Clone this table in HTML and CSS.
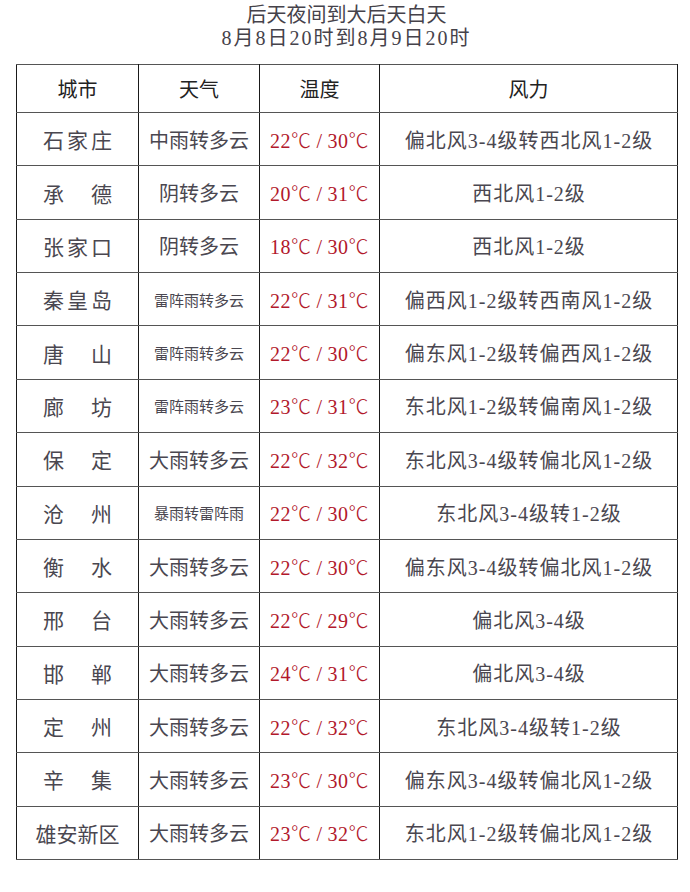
FILE: index.html
```html
<!DOCTYPE html>
<html lang="zh-CN">
<head>
<meta charset="utf-8">
<title>后天夜间到大后天白天</title>
<link rel="stylesheet" href="styles.css">
</head>
<body>
<div class="page">
  <div class="title">
    <div class="title-line">后天夜间到大后天白天</div>
    <div class="title-line spaced">8月8日20时到8月9日20时</div>
  </div>
  <table class="weather">
    <colgroup>
      <col class="c-city"><col class="c-wx"><col class="c-temp"><col class="c-wind">
    </colgroup>
    <thead>
      <tr><th>城市</th><th>天气</th><th>温度</th><th>风力</th></tr>
    </thead>
    <tbody>
      <tr><td class="city">石家庄</td><td>中雨转多云</td><td class="temp">22<span class="deg">℃</span><span class="sl">/</span>30<span class="deg">℃</span></td><td class="wind">偏北风3-4级转西北风1-2级</td></tr>
      <tr><td class="city">承　德</td><td>阴转多云</td><td class="temp">20<span class="deg">℃</span><span class="sl">/</span>31<span class="deg">℃</span></td><td class="wind">西北风1-2级</td></tr>
      <tr><td class="city">张家口</td><td>阴转多云</td><td class="temp">18<span class="deg">℃</span><span class="sl">/</span>30<span class="deg">℃</span></td><td class="wind">西北风1-2级</td></tr>
      <tr><td class="city">秦皇岛</td><td class="small">雷阵雨转多云</td><td class="temp">22<span class="deg">℃</span><span class="sl">/</span>31<span class="deg">℃</span></td><td class="wind">偏西风1-2级转西南风1-2级</td></tr>
      <tr><td class="city">唐　山</td><td class="small">雷阵雨转多云</td><td class="temp">22<span class="deg">℃</span><span class="sl">/</span>30<span class="deg">℃</span></td><td class="wind">偏东风1-2级转偏西风1-2级</td></tr>
      <tr><td class="city">廊　坊</td><td class="small">雷阵雨转多云</td><td class="temp">23<span class="deg">℃</span><span class="sl">/</span>31<span class="deg">℃</span></td><td class="wind">东北风1-2级转偏南风1-2级</td></tr>
      <tr><td class="city">保　定</td><td>大雨转多云</td><td class="temp">22<span class="deg">℃</span><span class="sl">/</span>32<span class="deg">℃</span></td><td class="wind">东北风3-4级转偏北风1-2级</td></tr>
      <tr><td class="city">沧　州</td><td class="small">暴雨转雷阵雨</td><td class="temp">22<span class="deg">℃</span><span class="sl">/</span>30<span class="deg">℃</span></td><td class="wind">东北风3-4级转1-2级</td></tr>
      <tr><td class="city">衡　水</td><td>大雨转多云</td><td class="temp">22<span class="deg">℃</span><span class="sl">/</span>30<span class="deg">℃</span></td><td class="wind">偏东风3-4级转偏北风1-2级</td></tr>
      <tr><td class="city">邢　台</td><td>大雨转多云</td><td class="temp">22<span class="deg">℃</span><span class="sl">/</span>29<span class="deg">℃</span></td><td class="wind">偏北风3-4级</td></tr>
      <tr><td class="city">邯　郸</td><td>大雨转多云</td><td class="temp">24<span class="deg">℃</span><span class="sl">/</span>31<span class="deg">℃</span></td><td class="wind">偏北风3-4级</td></tr>
      <tr><td class="city">定　州</td><td>大雨转多云</td><td class="temp">22<span class="deg">℃</span><span class="sl">/</span>32<span class="deg">℃</span></td><td class="wind">东北风3-4级转1-2级</td></tr>
      <tr><td class="city">辛　集</td><td>大雨转多云</td><td class="temp">23<span class="deg">℃</span><span class="sl">/</span>30<span class="deg">℃</span></td><td class="wind">偏东风3-4级转偏北风1-2级</td></tr>
      <tr><td class="city tight">雄安新区</td><td>大雨转多云</td><td class="temp">23<span class="deg">℃</span><span class="sl">/</span>32<span class="deg">℃</span></td><td class="wind">东北风1-2级转偏北风1-2级</td></tr>
    </tbody>
  </table>
</div>
</body>
</html>
```

FILE: styles.css
```css
html, body {
  margin: 0;
  padding: 0;
  background: #ffffff;
}

body {
  font-family: "Liberation Serif", "Noto Sans CJK SC", serif;
  color: #4a4750;
}

.page {
  width: 690px;
  height: 892px;
  padding: 0 0 0 16px;
  box-sizing: border-box;
}

.title {
  height: 64px;
  padding-top: 4px;
  box-sizing: border-box;
  width: 661px;
  text-align: center;
  font-size: 20px;
  line-height: 23px;
  color: #45424a;
}

.title-line.spaced {
  letter-spacing: 2px;
}

.weather {
  border-collapse: collapse;
  table-layout: fixed;
  width: 661px;
  border-top: 1px solid #111;
  border-left: 1px solid #777;
  border-right: 1px solid #888;
  border-bottom: 1px solid #888;
}

.c-city { width: 122px; }
.c-wx { width: 121px; }
.c-temp { width: 120px; }
.c-wind { width: 298px; }

.weather th,
.weather td {
  text-align: center;
  vertical-align: middle;
  padding: 0;
  border-left: 1px solid #1a1a1a;
  border-right: 1px solid #1a1a1a;
  border-top: 1px solid #555;
  border-bottom: 1px solid #555;
  white-space: nowrap;
  overflow: hidden;
}

.weather th {
  height: 47px;
  font-weight: normal;
  font-size: 20px;
  color: #222;
}

.weather td {
  height: 52.36px;
  font-size: 20px;
}

.weather td.city {
  font-size: 21px;
  letter-spacing: 3px;
  text-indent: 3px;
}

.weather td.city.tight {
  letter-spacing: 0;
  text-indent: 0;
}

.weather td.small {
  font-size: 15px;
}

.weather td.wind {
  letter-spacing: 1px;
  text-indent: 1px;
}

.weather td.temp {
  color: #b2182b;
  font-size: 20px;
  letter-spacing: 0.5px;
}

.deg {
  font-family: "Noto Sans CJK SC", sans-serif;
  font-weight: 300;
}

.sl {
  display: inline-block;
  margin: 0 5px;
}
```
